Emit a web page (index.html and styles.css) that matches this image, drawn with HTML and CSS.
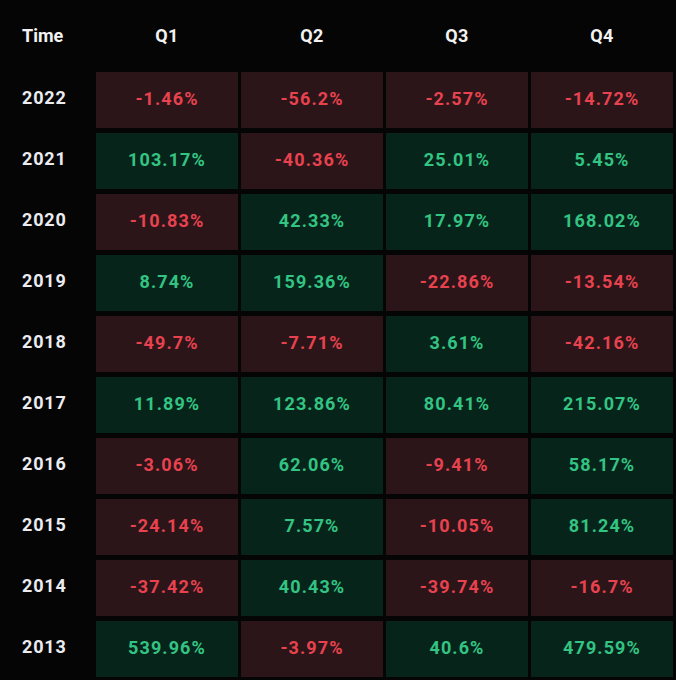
FILE: index.html
```html
<!DOCTYPE html>
<html>
<head>
<meta charset="utf-8">
<link rel="stylesheet" href="styles.css">
</head>
<body>
<div class="table">
  <div class="head label">Time</div>
  <div class="head">Q1</div>
  <div class="head">Q2</div>
  <div class="head">Q3</div>
  <div class="head">Q4</div>

  <div class="year">2022</div>
  <div class="cell neg">-1.46%</div>
  <div class="cell neg">-56.2%</div>
  <div class="cell neg">-2.57%</div>
  <div class="cell neg">-14.72%</div>

  <div class="year">2021</div>
  <div class="cell pos">103.17%</div>
  <div class="cell neg">-40.36%</div>
  <div class="cell pos">25.01%</div>
  <div class="cell pos">5.45%</div>

  <div class="year">2020</div>
  <div class="cell neg">-10.83%</div>
  <div class="cell pos">42.33%</div>
  <div class="cell pos">17.97%</div>
  <div class="cell pos">168.02%</div>

  <div class="year">2019</div>
  <div class="cell pos">8.74%</div>
  <div class="cell pos">159.36%</div>
  <div class="cell neg">-22.86%</div>
  <div class="cell neg">-13.54%</div>

  <div class="year">2018</div>
  <div class="cell neg">-49.7%</div>
  <div class="cell neg">-7.71%</div>
  <div class="cell pos">3.61%</div>
  <div class="cell neg">-42.16%</div>

  <div class="year">2017</div>
  <div class="cell pos">11.89%</div>
  <div class="cell pos">123.86%</div>
  <div class="cell pos">80.41%</div>
  <div class="cell pos">215.07%</div>

  <div class="year">2016</div>
  <div class="cell neg">-3.06%</div>
  <div class="cell pos">62.06%</div>
  <div class="cell neg">-9.41%</div>
  <div class="cell pos">58.17%</div>

  <div class="year">2015</div>
  <div class="cell neg">-24.14%</div>
  <div class="cell pos">7.57%</div>
  <div class="cell neg">-10.05%</div>
  <div class="cell pos">81.24%</div>

  <div class="year">2014</div>
  <div class="cell neg">-37.42%</div>
  <div class="cell pos">40.43%</div>
  <div class="cell neg">-39.74%</div>
  <div class="cell neg">-16.7%</div>

  <div class="year">2013</div>
  <div class="cell pos">539.96%</div>
  <div class="cell neg">-3.97%</div>
  <div class="cell pos">40.6%</div>
  <div class="cell pos">479.59%</div>
</div>
</body>
</html>
```

FILE: styles.css
```css
html, body {
  margin: 0;
  padding: 0;
  background: #050505;
}
body {
  width: 676px;
  height: 680px;
  overflow: hidden;
  font-family: Roboto, "Liberation Sans", sans-serif;
  font-weight: 700;
}
.table {
  display: grid;
  grid-template-columns: 93px repeat(4, 142px);
  grid-template-rows: 67px repeat(10, 56px);
  column-gap: 3px;
  row-gap: 5px;
}
.head {
  display: flex;
  align-items: flex-start;
  justify-content: center;
  padding-top: 25px;
  box-sizing: border-box;
  color: #f2f2f2;
  font-size: 18px;
  letter-spacing: 0.5px;
}
.head.label {
  justify-content: flex-start;
  padding-left: 22px;
  letter-spacing: 0;
}
.year {
  display: flex;
  align-items: center;
  padding-left: 22px;
  padding-bottom: 6px;
  box-sizing: border-box;
  color: #ececf0;
  font-size: 18px;
  letter-spacing: 0.8px;
}
.cell {
  display: flex;
  align-items: center;
  justify-content: center;
  padding-bottom: 3px;
  box-sizing: border-box;
  font-size: 18px;
  letter-spacing: 1.1px;
}
.neg {
  background: #2b1519;
  color: #e8424f;
}
.pos {
  background: #07241a;
  color: #33c484;
}
```
